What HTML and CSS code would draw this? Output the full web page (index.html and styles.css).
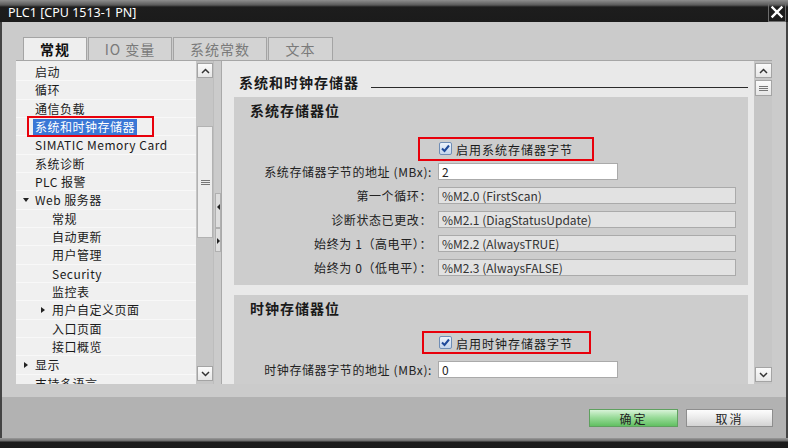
FILE: index.html
```html
<!DOCTYPE html>
<html>
<head>
<meta charset="utf-8">
<title>PLC1</title>
<link rel="stylesheet" href="styles.css">
</head>
<body>
<div class="window">
  <div class="titlebar">
    <span class="title">PLC1 [CPU 1513-1 PN]</span>
    <span class="close"><svg width="14" height="14" viewBox="0 0 14 14"><path d="M2.5 2.5 L11.5 11.5 M11.5 2.5 L2.5 11.5" stroke="#fff" stroke-width="2.4" stroke-linecap="square"/></svg></span>
  </div>
  <div class="body">
    <div class="tabs">
      <div class="tab t1 active">常规</div>
      <div class="tab t2">IO 变量</div>
      <div class="tab t3">系统常数</div>
      <div class="tab t4">文本</div>
    </div>
    <div class="content">
      <div class="tree">
        <div class="row"><span class="tw"></span>启动</div>
        <div class="row"><span class="tw"></span>循环</div>
        <div class="row"><span class="tw"></span>通信负载</div>
        <div class="row selrow"><span class="tw"></span><span class="sel">系统和时钟存储器</span><span class="mark mark-tree"></span></div>
        <div class="row"><span class="tw"></span>SIMATIC Memory Card</div>
        <div class="row"><span class="tw"></span>系统诊断</div>
        <div class="row"><span class="tw"></span>PLC 报警</div>
        <div class="row"><span class="tw"><i class="tri-down"></i></span>Web 服务器</div>
        <div class="row l2"><span class="tw"></span>常规</div>
        <div class="row l2"><span class="tw"></span>自动更新</div>
        <div class="row l2"><span class="tw"></span>用户管理</div>
        <div class="row l2"><span class="tw"></span>Security</div>
        <div class="row l2"><span class="tw"></span>监控表</div>
        <div class="row l2"><span class="tw"><i class="tri-right"></i></span>用户自定义页面</div>
        <div class="row l2"><span class="tw"></span>入口页面</div>
        <div class="row l2"><span class="tw"></span>接口概览</div>
        <div class="row"><span class="tw"><i class="tri-right"></i></span>显示</div>
        <div class="row"><span class="tw"></span>支持多语言</div>
      </div>
      <div class="vs vs-l">
        <div class="sbb"><svg width="9" height="6" viewBox="0 0 9 6"><path d="M1 5 L4.5 1.5 L8 5" fill="none" stroke="#333" stroke-width="1.5"/></svg></div>
        <div class="gap-l"></div>
        <div class="thumb thumb-l"><svg width="9" height="7" viewBox="0 0 9 7"><path d="M0 1.5 H9 M0 3.5 H9 M0 5.5 H9" stroke="#777" stroke-width="1"/></svg></div>
        <div class="fill"></div>
        <div class="sbb"><svg width="9" height="6" viewBox="0 0 9 6"><path d="M1 1 L4.5 4.5 L8 1" fill="none" stroke="#333" stroke-width="1.5"/></svg></div>
      </div>
      <div class="splitter">
        <div class="sp-btn sp-a"><i class="tri-left"></i></div>
        <div class="sp-btn sp-b"><i class="tri-right small"></i></div>
      </div>
      <div class="props">
        <div class="ph"><span class="ph-t">系统和时钟存储器</span><span class="ph-rule"></span></div>
        <div class="sec sec1">
          <div class="sec-t">系统存储器位</div>
          <div class="cbrow">
            <svg class="cb" width="13" height="13" viewBox="0 0 13 13"><defs><linearGradient id="cg1" x1="0" y1="0" x2="0" y2="1"><stop offset="0" stop-color="#eef4fc"/><stop offset="1" stop-color="#c2d4ec"/></linearGradient></defs><rect x=".5" y=".5" width="12" height="12" rx="1.5" fill="url(#cg1)" stroke="#6f8db5"/><path d="M3 6.5 L5.5 9 L10 3.5" fill="none" stroke="#1f4a9a" stroke-width="2"/></svg>
            <span class="cbt">启用系统存储器字节</span>
            <span class="mark mark-c1"></span>
          </div>
          <div class="form">
            <span class="lb">系统存储器字节的地址 (MBx):</span><span class="in w-s">2</span>
            <span class="lb">第一个循环：</span><span class="in ro">%M2.0 (FirstScan)</span>
            <span class="lb">诊断状态已更改：</span><span class="in ro">%M2.1 (DiagStatusUpdate)</span>
            <span class="lb">始终为 1（高电平）：</span><span class="in ro">%M2.2 (AlwaysTRUE)</span>
            <span class="lb">始终为 0（低电平）：</span><span class="in ro">%M2.3 (AlwaysFALSE)</span>
          </div>
        </div>
        <div class="sec sec2">
          <div class="sec-t">时钟存储器位</div>
          <div class="cbrow">
            <svg class="cb" width="13" height="13" viewBox="0 0 13 13"><defs><linearGradient id="cg2" x1="0" y1="0" x2="0" y2="1"><stop offset="0" stop-color="#eef4fc"/><stop offset="1" stop-color="#c2d4ec"/></linearGradient></defs><rect x=".5" y=".5" width="12" height="12" rx="1.5" fill="url(#cg2)" stroke="#6f8db5"/><path d="M3 6.5 L5.5 9 L10 3.5" fill="none" stroke="#1f4a9a" stroke-width="2"/></svg>
            <span class="cbt">启用时钟存储器字节</span>
            <span class="mark mark-c2"></span>
          </div>
          <div class="form">
            <span class="lb">时钟存储器字节的地址 (MBx):</span><span class="in w-s">0</span>
          </div>
        </div>
      </div>
      <div class="vs vs-r">
        <div class="sbb"><svg width="9" height="6" viewBox="0 0 9 6"><path d="M1 5 L4.5 1.5 L8 5" fill="none" stroke="#333" stroke-width="1.5"/></svg></div>
        <div class="thumb thumb-r"><svg width="9" height="7" viewBox="0 0 9 7"><path d="M0 1.5 H9 M0 3.5 H9 M0 5.5 H9" stroke="#777" stroke-width="1"/></svg></div>
        <div class="fill"></div>
        <div class="sbb"><svg width="9" height="6" viewBox="0 0 9 6"><path d="M1 1 L4.5 4.5 L8 1" fill="none" stroke="#333" stroke-width="1.5"/></svg></div>
      </div>
    </div>
  </div>
  <div class="footer">
    <button class="btn ok">确定</button>
    <button class="btn cancel">取消</button>
  </div>
  <div class="bottom"></div>
</div>
</body>
</html>
```
FILE: styles.css
```css
* { box-sizing: border-box; }
html, body { margin: 0; padding: 0; }
body {
  width: 788px; height: 448px; overflow: hidden;
  font-family: "Noto Sans CJK SC", "Noto Sans", sans-serif;
  font-size: 12px; color: #1a1a1a; background: #cbcbcb;
}
.window { width: 788px; height: 448px; display: flex; flex-direction: column; }

.titlebar {
  height: 22px; flex: none;
  background: linear-gradient(#8e8e8e 0px, #5a5a5a 5px, #1d1d1d 7px, #1b1b1b 22px);
  display: flex; align-items: center; justify-content: space-between;
  padding: 0 2px 0 8px; color: #fff;
}
.title { font-family: "Noto Sans", sans-serif; font-size: 12.5px; line-height: 1; padding-top: 4px; }
.close {
  width: 18px; height: 19px; margin-top: 2px;
  border: 1px solid #6d6d6d; display: flex; align-items: center; justify-content: center;
}

.body {
  flex: 1; display: flex; flex-direction: column;
  border-left: 2px solid #444; border-right: 2px solid #444;
}
.tabs { display: flex; padding: 15px 0 0 21px; height: 38px; flex: none; }
.tab {
  height: 23px; border: 1px solid #a4a4a4; border-bottom: none;
  background: #d3d3d3; color: #7a7a7a; font-size: 14px; letter-spacing: 1px;
  display: flex; align-items: center; justify-content: center; margin-right: 1px;
}
.tab.active { background: #eeeeee; color: #111; font-weight: bold; }
.t1 { width: 64px; }
.t2 { width: 84px; }
.t3 { width: 94px; }
.t4 { width: 65px; }

.content {
  margin-left: 14px; width: 756px; height: 324px; flex: none;
  border-top: 1px solid #a6a6a6; display: flex;
}

/* tree */
.tree { width: 180px; background: #f0f0f0; padding-top: 2px; overflow: hidden; flex: none; }
.row {
  height: 18.33px; display: flex; align-items: center; padding-left: 6px;
  border-bottom: 1px solid #f8f8f8; position: relative; white-space: nowrap; letter-spacing: .5px;
}
.row.l2 { padding-left: 23px; }
.tw { width: 13px; flex: none; display: flex; align-items: center; }
.tri-down { display: block; width: 0; height: 0; margin-left: 1px;
  border-left: 3.5px solid transparent; border-right: 3.5px solid transparent; border-top: 4px solid #222; }
.tri-right { display: block; width: 0; height: 0; margin-left: 2px;
  border-top: 3.5px solid transparent; border-bottom: 3.5px solid transparent; border-left: 4px solid #222; }
.tri-left { display: block; width: 0; height: 0;
  border-top: 3px solid transparent; border-bottom: 3px solid transparent; border-right: 3px solid #222; }
.tri-right.small { margin-left: 0; border-top-width: 3px; border-bottom-width: 3px; border-left-width: 3px; }
.sel { background: #3a77d6; color: #fff; margin-left: -2px; padding: 0 2px; line-height: 16px; }
.mark { position: absolute; border: 2px solid #e8000b; pointer-events: none; }
.mark-tree { left: 11px; top: -2px; width: 127px; height: 21px; }

/* scrollbars */
.vs { display: flex; flex-direction: column; background: #c6c6c6; flex: none; }
.vs-l { width: 17px; padding: 2px 0 3px 1px; }
.vs-r { width: 18px; padding: 2px 0 2px 1px; }
.sbb {
  height: 15px; flex: none; border: 1px solid #a4a4a4;
  background: linear-gradient(#fbfbfb, #e6e6e6);
  display: flex; align-items: center; justify-content: center;
}
.gap-l { height: 48px; flex: none; }
.thumb {
  flex: none; border: 1px solid #b2b2b2; background: #ededed;
  display: flex; align-items: center; justify-content: center;
}
.thumb-l { height: 112px; }
.thumb-r { height: 16px; margin-top: 2px; background: linear-gradient(#fbfbfb, #e6e6e6); border-color: #a4a4a4; }
.fill { flex: 1; }

.splitter {
  width: 9px; flex: none; background: #cbcbcb;
  border-left: 1px solid #bdbdbd; border-right: 1px solid #a9a9a9;
  padding-top: 132px;
}
.sp-btn {
  width: 6px; margin-left: 1px; background: #dedede; border: 1px solid #b0b0b0;
  display: flex; justify-content: center;
}
.sp-a { height: 35px; padding-top: 10px; }
.sp-b { height: 24px; padding-top: 9px; }

/* properties */
.props { flex: 1; background: #e9e9e9; padding: 0 6px 0 12px; overflow: hidden; }
.ph { display: flex; align-items: center; height: 20px; margin-top: 11px; }
.ph-t { padding-left: 5px; font-size: 14px; font-weight: bold; letter-spacing: 1px; }
.ph-rule { flex: 1; height: 1px; background: #2a2a2a; margin: 10px 0 0 12px; }
.sec { background: #cdcdcd; padding: 0 0 9px 16px; }
.sec1 { margin-top: 5px; }
.sec2 { margin-top: 10px; padding-bottom: 30px; }
.sec-t { height: 26px; display: flex; align-items: center; font-size: 14px; font-weight: bold; letter-spacing: 1px; }
.cbrow {
  position: relative; height: 26px; margin-top: 13px;
  display: flex; align-items: center; padding-left: 189px;
}
.sec2 .cbrow { margin-top: 9px; }
.cb { flex: none; margin-top: -1px; }
.cbt { margin-left: 4px; letter-spacing: 1px; }
.mark-c1 { left: 168px; top: 1px; width: 176px; height: 24px; }
.mark-c2 { left: 172px; top: 1px; width: 169px; height: 23px; }

.form {
  display: grid; grid-template-columns: 182px auto; column-gap: 6px; row-gap: 7px;
  margin-top: 1px; justify-items: start;
}
.sec2 .form { margin-top: 5px; }
.lb { justify-self: end; line-height: 17px; letter-spacing: .6px; white-space: nowrap; color: #222; }
.in {
  height: 17px; border: 1px solid #aaaaaa; background: #fff; padding-left: 3px;
  display: flex; align-items: center; color: #222; white-space: nowrap;
}
.w-s { width: 180px; }
.ro { width: 298px; background: #e2e2e2; color: #333; }

/* footer */
.footer {
  height: 41px; flex: none; background: #b2b2b2;
  border-left: 2px solid #444; border-right: 2px solid #444;
  display: flex; justify-content: flex-end; align-items: flex-start;
  padding: 12px 13px 0 0; gap: 8px;
}
.btn {
  height: 18px; padding: 0; font-family: inherit; font-size: 12px; letter-spacing: 2px;
  color: #222; border: 1px solid #8e8e8e;
  background: linear-gradient(#fdfdfd, #ececec 45%, #d3d3d3);
}
.ok { width: 89px; border-color: #5fa05f; background: linear-gradient(#d8f3d8, #9bdc9b 45%, #62c062); }
.cancel { width: 87px; }
.bottom { height: 10px; flex: none; background: linear-gradient(#9a9a9a 0px, #6a6a6a 3px, #1c1c1c 4px, #1b1b1b 10px); }
```
